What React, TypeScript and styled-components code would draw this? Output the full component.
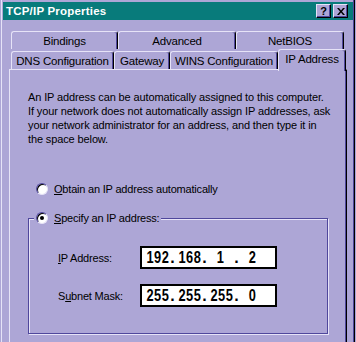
import React from "react";
import styled, { createGlobalStyle, css } from "styled-components";

const LAV = "#ada6d6";
const LIGHT = "#e6e3f7";
const DARK = "#4f479c";
const TEAL = "#087b7b";

const GlobalStyle = createGlobalStyle`
  html, body { margin: 0; padding: 0; background: ${LAV}; }
  body {
    font-family: "Liberation Sans", Arial, sans-serif;
    font-size: 11px;
    color: #000;
  }
`;

const Window = styled.div`
  width: 356px;
  height: 342px;
  box-sizing: border-box;
  padding: 2px 3px 0 3px;
  overflow: hidden;
  background: ${LAV};
  box-shadow: inset 1px 0 0 ${LAV}, inset 2px 0 0 ${LIGHT}, inset -1px 0 0 ${LAV},
    inset -2px 0 0 #000, inset -3px 0 0 ${DARK};
`;

const TitleBar = styled.div`
  height: 18px;
  background: ${TEAL};
  display: flex;
  align-items: center;
  padding: 0 5px 0 3px;
`;

const Title = styled.div`
  flex: 1;
  color: #fff;
  font-weight: bold;
  font-size: 11.5px;
  letter-spacing: 0.2px;
`;

const CaptionButton = styled.div<{ $gap?: boolean }>`
  width: 15px;
  height: 14px;
  box-sizing: border-box;
  margin-left: ${(p) => (p.$gap ? "2px" : "0")};
  background: ${LAV};
  border-top: 1px solid ${LIGHT};
  border-left: 1px solid ${LIGHT};
  border-right: 1px solid #000;
  border-bottom: 1px solid #000;
  box-shadow: inset -1px -1px 0 ${DARK};
  display: flex;
  align-items: center;
  justify-content: center;
  font-weight: bold;
  font-size: 11px;
  line-height: 1;
`;

const TabStrip = styled.div`
  margin: 11px 0 0 8px;
  display: flex;
  flex-direction: column;
`;

const TabRow = styled.div`
  display: flex;
  align-items: flex-end;
`;

const Tab = styled.div<{ $w: number; $active?: boolean }>`
  width: ${(p) => p.$w}px;
  height: 18px;
  box-sizing: border-box;
  border-top: 1px solid ${LIGHT};
  border-left: 1px solid ${LIGHT};
  border-right: 1px solid #000;
  border-top-left-radius: 3px;
  border-top-right-radius: 3px;
  box-shadow: inset -1px 0 0 ${DARK};
  background: ${LAV};
  display: flex;
  align-items: center;
  justify-content: center;
  padding-top: 1px;
  font-size: 11.5px;
  letter-spacing: -0.2px;
  white-space: nowrap;
  ${(p) =>
    p.$active &&
    css`
      height: 22px;
      margin-bottom: -2px;
      position: relative;
      z-index: 1;
      padding: 0 0 3px 0;
    `}
`;

const Panel = styled.div`
  margin-left: 6px;
  width: 338px;
  height: 300px;
  box-sizing: border-box;
  border-top: 1px solid ${LIGHT};
  border-left: 1px solid ${LIGHT};
  border-right: 1px solid #000;
  box-shadow: inset -1px 0 0 ${DARK};
  padding: 20px 18px 0 18px;
`;

const Intro = styled.p`
  margin: 0;
  line-height: 14px;
  letter-spacing: -0.12px;
  white-space: nowrap;
`;

const RadioRow = styled.label`
  display: flex;
  align-items: center;
  height: 14px;
  gap: 6px;
  letter-spacing: -0.2px;
  white-space: nowrap;
`;

const FirstChoice = styled(RadioRow)`
  margin: 36px 0 0 8px;
`;

const RadioDot = styled.span<{ $on?: boolean }>`
  width: 12px;
  height: 12px;
  box-sizing: border-box;
  border-radius: 50%;
  background: #fff;
  border: 1px solid;
  border-color: ${DARK} ${LIGHT} ${LIGHT} ${DARK};
  box-shadow: inset 1px 1px 0 #000;
  display: flex;
  align-items: center;
  justify-content: center;
  &::after {
    content: "";
    width: 4px;
    height: 4px;
    border-radius: 50%;
    background: ${(p) => (p.$on ? "#000" : "transparent")};
  }
`;

const Group = styled.fieldset`
  margin: 15px 0 0 0;
  padding: 0 5px 26px 5px;
  border: 1px solid ${DARK};
  box-shadow: 1px 1px 0 ${LIGHT}, inset 1px 1px 0 ${LIGHT};
  min-width: 0;
`;

const Legend = styled.legend`
  padding: 0 2px;
  background: ${LAV};
`;

const FieldRow = styled.div`
  display: flex;
  align-items: center;
  padding-left: 24px;
  margin-top: 15px;
  &:first-of-type {
    margin-top: 21px;
  }
`;

const FieldLabel = styled.span`
  width: 82px;
  letter-spacing: -0.2px;
`;

const IpBox = styled.div`
  width: 137px;
  height: 23px;
  box-sizing: border-box;
  border: 2px solid #000;
  background: #fff;
  display: flex;
  align-items: center;
  padding-left: 2px;
`;

const Octet = styled.span`
  width: 25px;
  text-align: center;
  font-weight: bold;
  font-size: 16px;
  letter-spacing: 0.6px;
  display: inline-block;
  transform: scaleX(0.8);
`;

const Dot = styled.span`
  width: 7px;
  font-weight: bold;
  font-size: 16px;
  text-align: center;
`;

function IpField({ value }: { value: string[] }) {
  return (
    <IpBox>
      {value.map((o, i) => (
        <React.Fragment key={i}>
          <Octet>{o}</Octet>
          {i < 3 && <Dot>.</Dot>}
        </React.Fragment>
      ))}
    </IpBox>
  );
}

export default function App() {
  return (
    <>
      <GlobalStyle />
      <Window>
        <TitleBar>
          <Title>TCP/IP Properties</Title>
          <CaptionButton>?</CaptionButton>
          <CaptionButton $gap>
            <svg width="8" height="7" viewBox="0 0 8 7">
              <path d="M0 0h2l2 2.5L6 0h2L5 3.5 8 7H6L4 4.5 2 7H0l3-3.5z" fill="#000" />
            </svg>
          </CaptionButton>
        </TitleBar>

        <TabStrip>
          <TabRow>
            <Tab $w={107}>Bindings</Tab>
            <Tab $w={118}>Advanced</Tab>
            <Tab $w={108}>NetBIOS</Tab>
          </TabRow>
          <TabRow>
            <Tab $w={103}>DNS Configuration</Tab>
            <Tab $w={56}>Gateway</Tab>
            <Tab $w={108}>WINS Configuration</Tab>
            <Tab $w={68} $active>IP Address</Tab>
          </TabRow>
        </TabStrip>

        <Panel>
          <Intro>
            An IP address can be automatically assigned to this computer.
            <br />
            If your network does not automatically assign IP addresses, ask
            <br />
            your network administrator for an address, and then type it in
            <br />
            the space below.
          </Intro>

          <FirstChoice>
            <RadioDot />
            <span>
              <u>O</u>btain an IP address automatically
            </span>
          </FirstChoice>

          <Group>
            <Legend>
              <RadioRow>
                <RadioDot $on />
                <span>
                  <u>S</u>pecify an IP address:
                </span>
              </RadioRow>
            </Legend>
            <FieldRow>
              <FieldLabel>
                <u>I</u>P Address:
              </FieldLabel>
              <IpField value={["192", "168", "1", "2"]} />
            </FieldRow>
            <FieldRow>
              <FieldLabel>
                S<u>u</u>bnet Mask:
              </FieldLabel>
              <IpField value={["255", "255", "255", "0"]} />
            </FieldRow>
          </Group>
        </Panel>
      </Window>
    </>
  );
}
